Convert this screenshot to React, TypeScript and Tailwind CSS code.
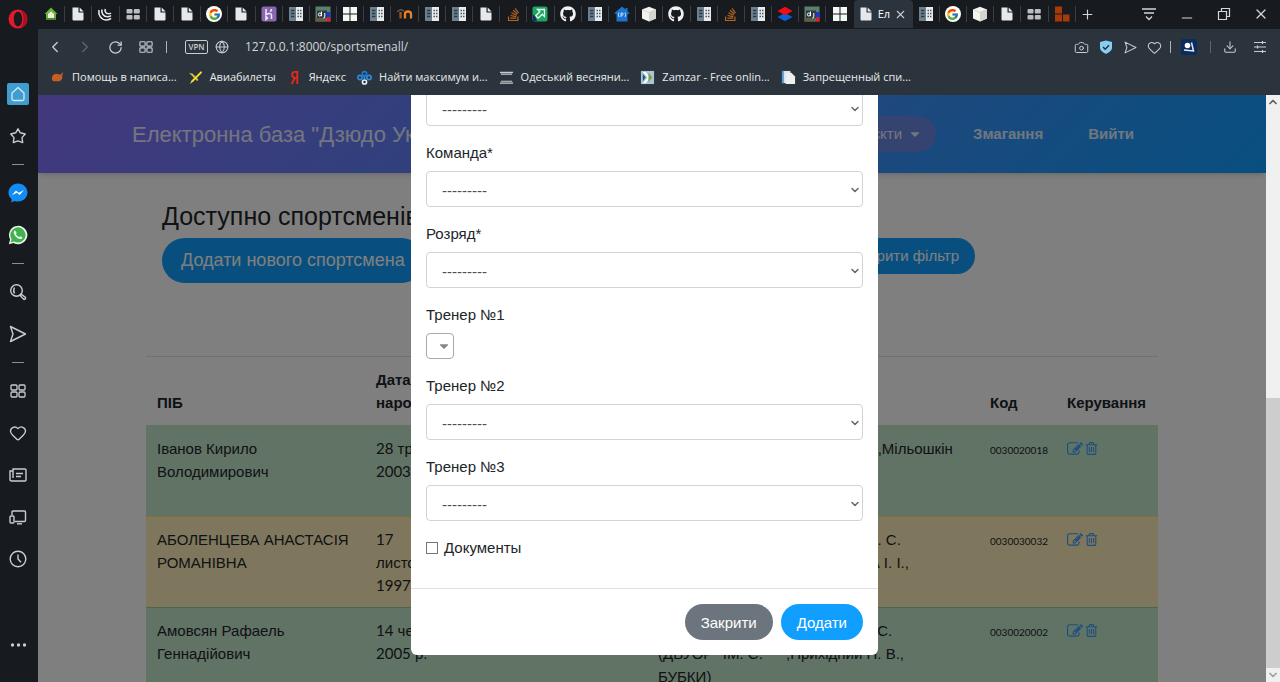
import React, { useState } from 'react';
import {
  Camera, ChevronDown, ChevronLeft, ChevronRight, ChevronUp, Download, Globe,
  Heart, Minus, Plus, RotateCw, X,
} from 'lucide-react';
import { FaGithub, FaStackOverflow, FaCaretDown } from 'react-icons/fa';
import { FcGoogle } from 'react-icons/fc';

type IconProps = { className?: string };

/* ---------- tab favicons ---------- */

const PageIcon = () => (
  <svg viewBox="0 0 16 16" className="size-4">
    <path d="M2.5 1.5h6v5h5v7q0 1-1 1h-9q-1 0-1-1z" fill="#e6e9ec" />
    <path d="M9.7 1.5l3.9 3.9H9.7z" fill="#e6e9ec" />
  </svg>
);

const HouseIcon = () => (
  <svg viewBox="0 0 16 16" className="size-4">
    <path d="M8 1.5L1.5 8H3v6h10V8h1.5z" fill="#6cb33e" />
    <path d="M5 8l3-2.500 3 2.500v4H5z" fill="#e9f3d9" />
    <path d="M3 12h10v2H3z" fill="#4a8a2c" />
  </svg>
);

const JqueryIcon = () => (
  <svg viewBox="0 0 16 16" className="size-4" fill="none" stroke="#e6e9ec" strokeWidth="1.6">
    <path d="M2 4c-1 5 2 10 7.500 10 2 0 3.500-.6 4.500-1.600" />
    <path d="M5 3.500C4 7 6.500 10.800 10.500 10.800c1.500 0 2.800-.6 3.500-1.300" />
    <path d="M8.300 3C7.500 5.500 9 7.800 11.500 7.800c1 0 1.900-.3 2.500-.8" />
  </svg>
);

const SpeedDialIcon = () => (
  <svg viewBox="0 0 16 16" className="size-4" fill="#b9bec4">
    <rect x="1.500" y="3" width="6" height="4.500" rx="1" />
    <rect x="8.800" y="3" width="6" height="4.500" rx="1" />
    <rect x="1.500" y="9" width="6" height="4.500" rx="1" />
    <rect x="8.800" y="9" width="6" height="4.500" rx="1" />
  </svg>
);

const HerokuIcon = () => (
  <svg viewBox="0 0 16 16" className="size-4">
    <rect x="0.500" y="0.500" width="15" height="15" rx="2" fill="#8a66b0" />
    <path d="M5 3v5.500c2.500-1.200 5.500-1.300 5.500.5v4M5 10.500v3l1.500-1.500zM10.500 3c0 1-.5 2-1.200 2.800" fill="none" stroke="#f1ebf7" strokeWidth="1.500" />
  </svg>
);

const PanelIcon = () => (
  <svg viewBox="0 0 16 16" className="size-4">
    <rect x="1" y="1" width="7" height="14" fill="#6d8090" />
    <rect x="8" y="1" width="7" height="14" fill="#e8ecef" />
    <path d="M3 4.500h3.500M3 7.500h3.500M3 10.500h3.500" stroke="#2e3a44" strokeWidth="1.300" />
    <path d="M9.500 4.500h1.500M12 4.500h1.500M9.500 7.500h1.500M12 7.500h1.500M9.500 10.500h1.500M12 10.500h1.500" stroke="#4a5864" strokeWidth="1.300" />
  </svg>
);

const DjangoIcon = () => (
  <svg viewBox="0 0 16 16" className="size-4">
    <rect x="0.500" y="0.500" width="15" height="15" fill="#5d8069" />
    <rect x="0.500" y="11" width="11" height="4.500" fill="#6a5a48" />
    <rect x="12" y="6" width="3.500" height="5.500" fill="#1b35d6" />
    <rect x="12" y="11.500" width="3.500" height="4" fill="#e01b22" />
    <rect x="2" y="4.500" width="10" height="7.500" fill="#2b3c48" />
    <circle cx="4.800" cy="8.500" r="1.500" fill="none" stroke="#fff" />
    <path d="M6.500 5.500v4.700M9.800 7v4q0 1-1.500 1" fill="none" stroke="#fff" />
  </svg>
);

const WindowsIcon = () => (
  <svg viewBox="0 0 16 16" className="size-4" fill="#f3faf3">
    <path d="M1 1h6.500v6.500H1zM8.500 1H15v6.500H8.500zM1 8.500h6.500V15H1zM8.500 8.500H15V15H8.500z" />
  </svg>
);

const MoodleIcon = () => (
  <svg viewBox="0 0 16 16" className="size-4" fill="none" strokeWidth="2.300">
    <path d="M0 5.500l4-2 3 1.500" stroke="#555" strokeWidth="1.500" />
    <path d="M3.500 12.500V6" stroke="#a8551c" />
    <path d="M8 12.500V8q0-2.500 3-2.500t3 2.500v4.500" stroke="#ee7f25" />
  </svg>
);

const ArrowIcon = () => (
  <svg viewBox="0 0 16 16" className="size-4">
    <rect x="0.500" y="0.500" width="15" height="15" rx="2" fill="#1fa463" />
    <path d="M5.500 3.500H12.500v7l-2.300-2.300-4 4-2.400-2.400 4-4z" fill="none" stroke="#e9fff2" strokeWidth="1.300" />
    <path d="M1 8l2.500 3L5 15H1z" fill="#142a6b" />
  </svg>
);

const PiHouseIcon = () => (
  <svg viewBox="0 0 16 16" className="size-4">
    <path d="M8 .5L0 7.500 2.500 8v7.500h11V8l2.500-.5-2.500-2.300V2h-2v1.500z" fill="#1b74cf" />
    <path d="M5 6.500q-1.500 2 0 4.500M11 6.500q1.500 2 0 4.500M7 11V7h1.200q1 0 1 1.100t-1 1.100H7" fill="none" stroke="#d5e8ff" strokeWidth="0.900" />
  </svg>
);

const CubeIcon = () => (
  <svg viewBox="0 0 16 16" className="size-4">
    <path d="M8 .8L15 3.500v9L8 15.500 1 12.500v-9z" fill="#f2f2ee" />
    <path d="M8 6.500l7-3v9l-7 3z" fill="#d5d5d0" />
    <path d="M1 3.500l7 3 7-3" fill="none" stroke="#c4c4bf" strokeWidth="0.600" />
  </svg>
);

const LayersIcon = () => (
  <svg viewBox="0 0 16 16" className="size-4">
    <path d="M8 7l7.500 4L8 15.200.5 11z" fill="#0b5fd0" />
    <path d="M8 .8l7.500 4.200L8 9.300.5 5z" fill="#f00f18" />
  </svg>
);

const BricksIcon = () => (
  <svg viewBox="0 0 16 16" className="size-4" fill="#a63a0a">
    <path d="M1 0.500h7v7H1zM1 8.500h7V15.500H1zM9 8.500h6.500v7H9z" />
  </svg>
);

const GithubIcon = () => <FaGithub className="size-4 text-[#f0f2f4]" />;
const GoogleIcon = () => (
  <span className="flex size-4 items-center justify-center rounded-full bg-white">
    <FcGoogle className="size-[13px]" />
  </span>
);
const StackIcon = () => <FaStackOverflow className="size-[15px] text-[#b8651f]" />;

const leftTabs = [
  HouseIcon, PageIcon, JqueryIcon, SpeedDialIcon, PageIcon, PageIcon, GoogleIcon, PageIcon,
  HerokuIcon, PanelIcon, DjangoIcon, WindowsIcon, PanelIcon, MoodleIcon, PanelIcon, PanelIcon,
  PageIcon, StackIcon, ArrowIcon, GithubIcon, PanelIcon, PiHouseIcon, CubeIcon, GithubIcon,
  PanelIcon, StackIcon, PanelIcon, LayersIcon, DjangoIcon, WindowsIcon,
];
const rightTabs = [PanelIcon, GoogleIcon, CubeIcon, PageIcon, SpeedDialIcon, BricksIcon];

function Tab({ icon: Icon, last }: { icon: () => React.ReactElement; last?: boolean }) {
  return (
    <button aria-label="Вкладка" className="flex h-full min-w-0 flex-1 items-center">
      <span className="flex flex-1 items-center justify-center"><Icon /></span>
      <span className={last ? 'h-4 w-px' : 'h-4 w-px bg-[#3a3f45]'} />
    </button>
  );
}

/* ---------- browser icons ---------- */

const GridIcon = ({ className }: IconProps) => (
  <svg viewBox="0 0 16 16" className={className} fill="none" stroke="currentColor" strokeWidth="1.300">
    <rect x="1" y="2" width="6" height="5" rx="1" />
    <rect x="9" y="2" width="6" height="5" rx="1" />
    <rect x="1" y="9" width="6" height="5" rx="1" />
    <rect x="9" y="9" width="6" height="5" rx="1" />
  </svg>
);

const FlowIcon = ({ className }: IconProps) => (
  <svg viewBox="0 0 18 18" className={className} fill="none" stroke="currentColor" strokeWidth="1.400" strokeLinejoin="round">
    <path d="M1.500 1.500L16.500 9l-15 7.500L4 9z" />
  </svg>
);

const OperaIcon = () => (
  <svg viewBox="0 0 20 20" className="size-5">
    <path fillRule="evenodd" d="M10 .5a9.500 9.500 0 100 19 9.500 9.500 0 000-19zm0 2.200c2.500 0 4.200 3.200 4.200 7.300s-1.700 7.300-4.200 7.300S5.800 14.100 5.800 10 7.500 2.700 10 2.700z" fill="#e3192d" />
    <path d="M12.500 1a9.500 9.500 0 010 18c2-2 3-5.500 3-9s-1-7-3-9z" fill="#a70e1e" />
  </svg>
);

const HomeIcon = () => (
  <span className="flex size-[22px] items-center justify-center rounded-xs bg-[#3f9dd0]">
    <svg viewBox="0 0 16 16" className="size-4" fill="none" stroke="#cfeafa" strokeWidth="1.300" strokeLinejoin="round">
      <path d="M8 1.500L2 7v6q0 1.500 1.500 1.500h9q1.500 0 1.500-1.500V7z" />
    </svg>
  </span>
);

const StarIcon = () => (
  <svg viewBox="0 0 18 18" className="size-[18px]" fill="none" stroke="currentColor" strokeWidth="1.400" strokeLinejoin="round">
    <path d="M9 1.800l2.300 4 4.900 1.200-3.200 3.600.7 5L9 13.900l-4.700 1.700.7-5L1.800 7l4.900-1.200z" />
  </svg>
);

const MessengerIcon = () => (
  <svg viewBox="0 0 20 20" className="size-5">
    <path d="M10 .5C4.700.5.500 4.500.500 9.500c0 2.700 1 5 3 6.600V19.500l3-1.600c1.100.4 2.300.6 3.500.6 5.300 0 9.500-4 9.500-9S15.300.5 10 .5z" fill="#118df5" />
    <path d="M3.800 12.200L8 7.500l2.800 2.300L16 7l-4.300 5-2.800-2.200z" fill="#fff" />
  </svg>
);

const WhatsappIcon = () => (
  <svg viewBox="0 0 20 20" className="size-5">
    <path d="M.8 19.200l1.300-4.800A9.200 9.200 0 1110 19.200q-2.400 0-4.500-1.200z" fill="#e8f3ea" />
    <path d="M2.800 17.200l.8-3A7.600 7.600 0 1110 17.600q-2 0-3.800-1.100z" fill="#42b34c" />
    <path d="M7 5.500c-1 .3-1.500 1.300-1.200 2.500.8 3 3 5.200 6 6 1.200.2 2.300-.4 2.500-1.500l-2.100-1.200-1 .9c-1.600-.7-2.700-1.700-3.300-3.200l.8-1z" fill="#fff" />
  </svg>
);

const SearchIcon = () => (
  <svg viewBox="0 0 18 18" className="size-[18px]" fill="none" stroke="currentColor" strokeWidth="1.400">
    <circle cx="7.500" cy="7.500" r="5.800" />
    <path d="M5.500 10.500Q3.800 7.500 5.500 4.500" />
    <path d="M12 11l4.500 3.500q.5 1.500-1.500 2L11 12.500z" />
  </svg>
);

const NewsIcon = () => (
  <svg viewBox="0 0 18 18" className="size-[18px]" fill="none" stroke="currentColor" strokeWidth="1.400">
    <path d="M4 3h12q1 0 1 1v10q0 1-1 1H2.500Q1 15 1 13.500V5h3zM4 5v7" />
    <path d="M7 7.500h7M7 10.500h5" />
  </svg>
);

const DevicesIcon = () => (
  <svg viewBox="0 0 18 18" className="size-[18px]" fill="none" stroke="currentColor" strokeWidth="1.400">
    <path d="M3 7V4q0-1 1-1h11.500q1 0 1 1v8.500q0 1-1 1H6" />
    <rect x="1" y="8" width="4" height="7" rx="1" />
    <path d="M8 15.800h5" />
  </svg>
);

const HistoryIcon = () => (
  <svg viewBox="0 0 18 18" className="size-[18px]" fill="none" stroke="currentColor" strokeWidth="1.400">
    <circle cx="9" cy="9" r="7.800" />
    <path d="M9 4.500V9l3 3.200" />
  </svg>
);

const DotsIcon = () => (
  <svg viewBox="0 0 18 18" className="size-[18px]" fill="currentColor">
    <circle cx="3.500" cy="9" r="1.700" />
    <circle cx="9.500" cy="9" r="1.700" />
    <circle cx="15.500" cy="9" r="1.700" />
  </svg>
);

function SideButton({ label, children }: { label: string; children: React.ReactNode }) {
  return (
    <button aria-label={label} className="flex h-[42px] w-full items-center justify-center text-[#c9ccd0]">
      {children}
    </button>
  );
}

const SideDivider = () => (
  <div className="flex h-[15px] items-center justify-center"><span className="h-px w-3 bg-[#8b8e92]" /></div>
);

function Sidebar() {
  return (
    <nav className="flex w-[38px] shrink-0 flex-col bg-[#171a1f] pr-0.5">
      <button aria-label="Opera" className="flex h-[38px] items-center justify-center"><OperaIcon /></button>
      <div className="mt-[35px]">
        <SideButton label="Домой"><HomeIcon /></SideButton>
        <SideButton label="Закладки"><StarIcon /></SideButton>
        <SideDivider />
        <SideButton label="Messenger"><MessengerIcon /></SideButton>
        <SideButton label="WhatsApp"><WhatsappIcon /></SideButton>
        <SideDivider />
        <SideButton label="Поиск"><SearchIcon /></SideButton>
        <SideButton label="Flow"><FlowIcon className="size-[18px]" /></SideButton>
        <SideDivider />
        <SideButton label="Экспресс-панель"><GridIcon className="size-4" /></SideButton>
        <SideButton label="Избранное"><Heart className="size-[18px]" strokeWidth={1.8} /></SideButton>
        <SideButton label="Новости"><NewsIcon /></SideButton>
        <SideButton label="Устройства"><DevicesIcon /></SideButton>
        <SideButton label="История"><HistoryIcon /></SideButton>
      </div>
      <div className="mt-auto mb-4"><SideButton label="Ещё"><DotsIcon /></SideButton></div>
    </nav>
  );
}

function TabBar() {
  return (
    <div className="flex h-[29px] bg-[#171a1f]">
      <div className="flex min-w-0 flex-1 items-center pb-px">
        {leftTabs.map((icon, i) => <Tab key={i} icon={icon} last={i === leftTabs.length - 1} />)}
        <div className="flex h-[28px] w-[59px] shrink-0 items-center self-end rounded-t-sm bg-[#2b343c] pl-1 text-[11px] text-white">
          <PageIcon />
          <span className="ml-1 w-4 overflow-hidden">Ел</span>
          <button aria-label="Закрыть вкладку"><X className="size-[13px] text-[#c9ccd0]" strokeWidth={2} /></button>
        </div>
        {rightTabs.map((icon, i) => <Tab key={i} icon={icon} />)}
      </div>
      <div className="flex w-[204px] shrink-0 items-center pb-px text-[#d4d6d9]">
        <button aria-label="Новая вкладка" className="ml-1"><Plus className="size-[15px]" strokeWidth={1.8} /></button>
        <button aria-label="Меню вкладок" className="ml-[46px]">
          <svg viewBox="0 0 16 14" className="h-[14px] w-4" fill="none" stroke="currentColor" strokeWidth="1.300">
            <path d="M1 2h14M3 6h10M5 9.500l3 3 3-3" />
          </svg>
        </button>
        <button aria-label="Свернуть" className="mt-2 ml-[22px]"><Minus className="size-4" strokeWidth={1.800} /></button>
        <button aria-label="Развернуть" className="ml-[22px]">
          <svg viewBox="0 0 14 14" className="size-[14px]" fill="none" stroke="currentColor" strokeWidth="1.200">
            <path d="M1.500 4.500h8v8h-8zM4.500 4.500v-3h8v8h-3" />
          </svg>
        </button>
        <button aria-label="Закрыть" className="ml-[22px]"><X className="size-4" strokeWidth={1.800} /></button>
      </div>
    </div>
  );
}

function AddressBar() {
  return (
    <div className="flex h-9 items-center text-[#c9ccd0]">
      <button aria-label="Назад" className="ml-2"><ChevronLeft className="size-[18px]" strokeWidth={1.800} /></button>
      <button aria-label="Вперёд" className="ml-3 text-[#5d656c]"><ChevronRight className="size-[18px]" strokeWidth={1.800} /></button>
      <button aria-label="Обновить" className="ml-[14px]"><RotateCw className="size-[15px]" strokeWidth={2} /></button>
      <button aria-label="Экспресс-панель" className="ml-4"><GridIcon className="size-[14px]" /></button>
      <span className="ml-[13px] h-3 w-px bg-[#aeb3b7]" />
      <span className="ml-[18px] flex h-[14px] w-[23px] items-center justify-center rounded-xs border border-[#c9ccd0] text-[8px] font-semibold">VPN</span>
      <Globe className="ml-[7px] size-[14px]" strokeWidth={1.800} />
      <input
        aria-label="Адрес"
        readOnly
        defaultValue="127.0.0.1:8000/sportsmenall/"
        className="ml-4 min-w-0 flex-1 bg-transparent text-[12px] text-[#d3d6d8] outline-none"
      />
      <div className="flex items-center pr-[13px]">
        <button aria-label="Снимок"><Camera className="size-[15px]" strokeWidth={1.600} /></button>
        <button aria-label="Защита" className="ml-[10px]">
          <svg viewBox="0 0 14 14" className="size-[14px]">
            <path d="M7 .5l6 1.500v6q0 3-6 6-6-3-6-6V2z" fill="#87cdf4" />
            <path d="M4 7l2.200 2.200L10 5.300" fill="none" stroke="#22313b" strokeWidth="1.500" />
          </svg>
        </button>
        <button aria-label="Отправить" className="ml-[11px]"><FlowIcon className="size-[13px]" /></button>
        <button aria-label="В избранное" className="ml-[10px]"><Heart className="size-[15px]" strokeWidth={1.700} /></button>
        <span className="ml-2 h-3 w-px bg-[#aeb3b7]" />
        <button aria-label="Расширение" className="ml-[10px]">
          <svg viewBox="0 0 16 16" className="size-4">
            <rect width="16" height="16" rx="2" fill="#0a2d5e" />
            <path d="M10.500 3.500l2 8.500-9.500-1" fill="none" stroke="#dfe9f5" strokeWidth="1.500" />
            <circle cx="6.500" cy="6.500" r="2.800" fill="#fff" />
          </svg>
        </button>
        <span className="ml-[13px] h-3 w-px bg-[#5d656c]" />
        <button aria-label="Загрузки" className="ml-3"><Download className="size-[14px]" strokeWidth={1.800} /></button>
        <button aria-label="Настройки" className="ml-4">
          <svg viewBox="0 0 14 14" className="size-[14px]" stroke="currentColor" strokeWidth="1.200">
            <path d="M1 2.500h12M1 7h12M1 11.500h12M9.500 1v3M4.500 5.500v3M9.500 10v3" />
          </svg>
        </button>
      </div>
    </div>
  );
}

const bookmarks = [
  {
    label: 'Помощь в написа...',
    icon: <path d="M2 9q0-4 4-5 3 0 5 1l3-3-1 4q1 4-3 6H5q-3 0-3-3z" fill="#c75f24" />,
  },
  {
    label: 'Авиабилеты',
    icon: <><path d="M1 3l4 1 6 6-1 2z" fill="#d4c33a" /><path d="M14 1L4 11l-2 4 4-3 9-9z" fill="#f4dc2a" /></>,
  },
  {
    label: 'Яндекс',
    icon: <path d="M11 1v14M11 2H8.500Q5.500 2 5.500 5T8.500 8.500H11M8.500 8.500L5 15" fill="none" stroke="#e8271c" strokeWidth="2" />,
  },
  {
    label: 'Найти максимум и...',
    icon: (
      <g fill="none" strokeWidth="1.700">
        <circle cx="3.200" cy="8" r="2.300" stroke="#2b8ee6" /><circle cx="12.800" cy="8" r="2.300" stroke="#2b8ee6" />
        <circle cx="8" cy="4" r="2.300" stroke="#1f7ad0" /><circle cx="8" cy="12.800" r="2.200" stroke="#e8eef4" /><path d="M8 6v4" stroke="#2b8ee6" />
      </g>
    ),
  },
  {
    label: 'Одеський весняни...',
    icon: <path d="M1 2.500h14M2 4.500h12M2 12h12M1 14h14" stroke="#c7cbcf" strokeWidth="1.300" />,
  },
  {
    label: 'Zamzar - Free onlin...',
    icon: <><path d="M1 1h14v14H1z" fill="#a9c6d8" /><path d="M3 2l5 6-5 6h3l5-6-5-6z" fill="#fff" /><path d="M9 3l4 5-4 5z" fill="#7ba23a" /><path d="M3 4l3 4-3 4z" fill="#254f7c" /></>,
  },
  {
    label: 'Запрещенный спи...',
    icon: <><path d="M1 1h9v13H1z" fill="#d4e6f3" /><path d="M1 1h2v13H1z" fill="#5896c8" /><path d="M5 3h6l4 4v8H5z" fill="#eeeeec" /></>,
  },
];

function BookmarksBar() {
  return (
    <div className="flex h-[30px] items-center gap-[11px] pb-1.5 pl-3">
      {bookmarks.map((b) => (
        <a key={b.label} href="#" className="flex items-center gap-[7px] text-[11px] whitespace-nowrap text-[#e8eaec]">
          <svg viewBox="0 0 16 16" className="size-[15px]">{b.icon}</svg>
          {b.label}
        </a>
      ))}
    </div>
  );
}

/* ---------- page ---------- */

const EditIcon = () => (
  <svg viewBox="0 0 1792 1792" className="size-4" fill="currentColor">
    <path d="M888 1184l116-116-152-152-116 116v56h96v96h56zm440-720q-16-16-33 1l-350 350q-17 17-1 33t33-1l350-350q17-17 1-33zm80 594v190q0 119-84.500 203.500t-203.500 84.500h-832q-119 0-203.500-84.500t-84.500-203.500v-832q0-119 84.500-203.500t203.500-84.500h832q63 0 117 25 15 7 18 23 3 17-9 29l-49 49q-14 14-32 8-23-6-45-6h-832q-66 0-113 47t-47 113v832q0 66 47 113t113 47h832q66 0 113-47t47-113v-126q0-13 9-22l64-64q15-15 35-7t20 29zm-96-738l288 288-672 672h-288v-288zm444 132l-92 92-288-288 92-92q28-28 68-28t68 28l152 152q28 28 28 68t-28 68z" />
  </svg>
);

const TrashIcon = () => (
  <svg viewBox="0 0 1792 1792" className="size-[15px]" fill="currentColor">
    <path d="M704 736v576q0 14-9 23t-23 9h-64q-14 0-23-9t-9-23v-576q0-14 9-23t23-9h64q14 0 23 9t9 23zm256 0v576q0 14-9 23t-23 9h-64q-14 0-23-9t-9-23v-576q0-14 9-23t23-9h64q14 0 23 9t9 23zm256 0v576q0 14-9 23t-23 9h-64q-14 0-23-9t-9-23v-576q0-14 9-23t23-9h64q14 0 23 9t9 23zm128 724v-948h-896v948q0 22 7 40.500t14.500 27 10.500 8.500h832q3 0 10.500-8.500t14.500-27 7-40.500zm-672-1076h448l-48-117q-7-9-17-11h-317q-10 2-17 11zm928 32v64q0 14-9 23t-23 9h-96v948q0 83-47 143.500t-113 60.500h-832q-66 0-113-58.500t-47-141.500v-952h-96q-14 0-23-9t-9-23v-64q0-14 9-23t23-9h309l70-167q15-37 54-63t79-26h320q40 0 79 26t54 63l70 167h309q14 0 23 9t9 23z" />
  </svg>
);

const sportsmen = [
  {
    name: ['Іванов Кирило', 'Володимирович'],
    born: [['28', ' травня'], ['2003', ' р.']],
    club: [],
    trainers: ['Волошин Ю. ,Мільошкін'],
    code: '0030020018',
    row: 'bg-[#c3e6cb] border-[#c3e6cb]',
  },
  {
    name: ['АБОЛЕНЦЕВА АНАСТАСІЯ', 'РОМАНІВНА'],
    born: [['17', ''], ['', 'листопада'], ['1997', ' р.']],
    club: [],
    trainers: ['МАЛИШЕВ Д. С.', ',ГОРОДСЬКА І. І.,'],
    code: '0030030032',
    row: 'bg-[#ffeeba] border-[#ffdf7e]',
  },
  {
    name: ['Амовсян Рафаель', 'Геннадійович'],
    born: [['14', ' червня'], ['2005', ' р.']],
    club: ['Донецька', '(ДВУОР "ІМ. С.', 'БУБКИ)'],
    trainers: ['Аветисян Ж. С.', ',Прихідний Н. В.,'],
    code: '0030020002',
    row: 'bg-[#c3e6cb] border-[#8fd19e]',
  },
];

const Lines = ({ items }: { items: string[] }) => (
  <>{items.map((t) => <span key={t} className="block whitespace-nowrap">{t}</span>)}</>
);

function SportsmenTable() {
  return (
    <table className="w-full table-fixed border-collapse text-left text-[15px] leading-[23px]">
      <colgroup>
        <col className="w-[219px]" />
        <col className="w-[100px]" />
        <col />
        <col className="w-[128px]" />
        <col className="w-[204px]" />
        <col className="w-[77px]" />
        <col className="w-[102px]" />
      </colgroup>
      <thead>
        <tr className="border-t border-[#dee2e6] align-bottom">
          <th className="px-[11px] py-[11px]">ПІБ</th>
          <th className="px-[11px] py-[11px]">Дата народження</th>
          <th />
          <th />
          <th />
          <th className="px-[11px] py-[11px]">Код</th>
          <th className="px-[11px] py-[11px]">Керування</th>
        </tr>
      </thead>
      <tbody>
        {sportsmen.map((s) => (
          <tr key={s.code} className={`h-[91px] border-t align-top ${s.row}`}>
            <td className="px-[11px] pt-[11px] pb-[10px]"><Lines items={s.name} /></td>
            <td className="px-[11px] pt-[11px] pb-[10px]">
              {s.born.map(([num, text]) => (
                <span key={num + text} className="block whitespace-nowrap">
                  <span className="font-[Lato,sans-serif]">{num}</span>{text}
                </span>
              ))}
            </td>
            <td />
            <td className="px-[11px] pt-[11px] pb-[10px]"><Lines items={s.club} /></td>
            <td className="px-[11px] pt-[11px] pb-[10px]"><Lines items={s.trainers} /></td>
            <td className="px-[11px] pt-[13px] font-[Lato,sans-serif] text-[10px]">{s.code}</td>
            <td className="px-[11px] pt-[15px]">
              <span className="flex gap-px text-[#3b9cff]">
                <a href="#" aria-label="Редагувати"><EditIcon /></a>
                <a href="#" aria-label="Видалити"><TrashIcon /></a>
              </span>
            </td>
          </tr>
        ))}
      </tbody>
    </table>
  );
}

function Page() {
  return (
    <div className="flex flex-col bg-white text-[#212529]">
      <header className="flex h-[78px] shrink-0 items-center bg-linear-[135deg] from-[#8670fa] via-[#4a8cfc] via-55% to-[#109fff] pl-[94px] text-[15px] text-white/85 shadow-md">
        <a href="#" className="text-[22px]">Електронна база "Дзюдо України"</a>
        <nav className="mr-[132px] ml-auto flex items-center">
          <button className="flex h-9 items-center gap-1.5 rounded-full bg-[#6886e0] px-3.5">
            Об'єкти <FaCaretDown className="size-[14px]" />
          </button>
          <a href="#" className="ml-[37px] font-bold">Змагання</a>
          <a href="#" className="ml-[45px] font-bold">Вийти</a>
        </nav>
      </header>
      <main className="mr-[108px] ml-[108px]">
        <div className="flex h-[183px] flex-col px-4 pt-[27px]">
          <h1 className="text-[25px] leading-8">Доступно спортсменів</h1>
          <div className="mt-[6px] flex items-start">
            <button className="h-[45px] rounded-full bg-[#109fff] px-[19px] text-[18px] text-white">Додати нового спортсмена</button>
            <button className="mr-[167px] ml-auto h-9 rounded-full bg-[#109fff] px-4 text-[15px] text-white">Відкрити фільтр</button>
          </div>
        </div>
        <SportsmenTable />
      </main>
    </div>
  );
}

function SelectField({ id, label }: { id: string; label?: string }) {
  return (
    <div className="mb-[15px]">
      {label && <label htmlFor={id} className="mb-[7px] block">{label}</label>}
      <div className="relative">
        <select
          id={id}
          aria-label={label ? undefined : 'Область'}
          className="block h-9 w-full appearance-none rounded-sm border border-[#ced4da] bg-white px-[15px] pt-[3px] text-[#495057]"
        >
          <option>---------</option>
        </select>
        <ChevronDown className="pointer-events-none absolute top-[13px] right-[2px] size-3 text-[#666]" strokeWidth={3} />
      </div>
    </div>
  );
}

function AddSportsmanModal() {
  const [docs, setDocs] = useState(false);

  return (
    <div className="absolute inset-0 flex flex-col items-center justify-end overflow-hidden bg-black/50 pr-[15px] pb-[27px]">
      <form className="w-[467px] rounded-md bg-white text-[15px] leading-[23px] text-[#212529]" onSubmit={(e) => e.preventDefault()}>
        <div className="px-[15px] pb-[15px]">
          <SelectField id="region" />
          <SelectField id="team" label="Команда*" />
          <SelectField id="rank" label="Розряд*" />
          <div className="mb-[15px]">
            <label htmlFor="trainer1" className="mb-[7px] block">Тренер №1</label>
            <div className="relative w-7">
              <select id="trainer1" className="block h-[26px] w-7 appearance-none rounded-sm border border-[#aaa] bg-white" />
              <FaCaretDown className="pointer-events-none absolute top-[6px] right-[3px] size-[14px] text-[#888]" />
            </div>
          </div>
          <SelectField id="trainer2" label="Тренер №2" />
          <SelectField id="trainer3" label="Тренер №3" />
          <div className="mb-[14px] flex items-center gap-[6px]">
            <input
              id="docs"
              type="checkbox"
              checked={docs}
              onChange={(e) => setDocs(e.target.checked)}
              className="size-3 appearance-none border border-[#767676] bg-white checked:bg-[#109fff]"
            />
            <label htmlFor="docs">Документы</label>
          </div>
        </div>
        <div className="flex justify-end gap-2 border-t border-[#dee2e6] p-[15px]">
          <button type="button" className="h-9 rounded-full bg-[#6c757d] px-4 text-white">Закрити</button>
          <button type="submit" className="h-9 rounded-full bg-[#109fff] px-4 text-white">Додати</button>
        </div>
      </form>
    </div>
  );
}

export default function App() {
  return (
    <div className="flex h-screen overflow-hidden">
      <Sidebar />
      <div className="flex min-w-0 flex-1 flex-col">
        <div className="bg-[#2b343c] font-['Open_Sans','Noto_Sans',sans-serif]">
          <TabBar />
          <AddressBar />
          <BookmarksBar />
        </div>
        <div className="flex min-h-0 flex-1 font-['Liberation_Sans',Arial,sans-serif]">
          <div className="relative min-w-0 flex-1 overflow-hidden bg-white">
            <Page />
            <AddSportsmanModal />
          </div>
          {/* scrollbar */}
          <div className="flex w-[14px] shrink-0 flex-col items-center bg-[#f0f0f0] text-[#606060]">
            <ChevronUp className="my-px size-3 shrink-0" strokeWidth={3.500} />
            <div className="mt-auto h-[46%] w-full bg-[#cdcdcd]" />
            <ChevronDown className="my-px size-3 shrink-0 text-[#a0a0a0]" strokeWidth={3.500} />
          </div>
        </div>
      </div>
    </div>
  );
}
